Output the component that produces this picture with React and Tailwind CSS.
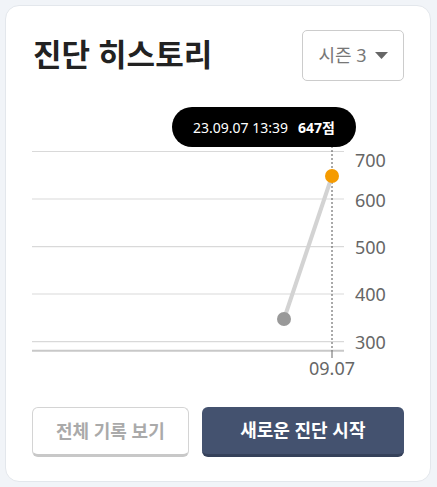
const ticks = [
  { v: 700, y: 51.5, ly: 60 },
  { v: 600, y: 99, ly: 100 },
  { v: 500, y: 146.7, ly: 147 },
  { v: 400, y: 194, ly: 194 },
  { v: 300, y: 241.7, ly: 242 },
];

const HistoryChart = () => {
  return (
    <div className="relative h-[300px] w-[374px]">
      <svg width="374" height="300" className="block">
        {ticks.map((t) => (
          <g key={t.v}>
            <line x1="0" x2="312" y1={t.y} y2={t.y} stroke="#d9d9d9" strokeWidth="1.2" />
            <text
              x="323"
              y={t.ly}
              dominantBaseline="central"
              fontSize="18"
              fill="#666"
              fontFamily="'Noto Sans', sans-serif"
            >
              {t.v}
            </text>
          </g>
        ))}
        <line x1="0" x2="312" y1="250.7" y2="250.7" stroke="#c8c8c8" strokeWidth="2" />
        <line x1="300" x2="300" y1="250" y2="258" stroke="#666" strokeWidth="1" />
        <line x1="300" x2="300" y1="42" y2="250" stroke="#555" strokeWidth="1" strokeDasharray="2 2" />
        <line x1="252" y1="219" x2="300" y2="76" stroke="#d3d3d3" strokeWidth="4" strokeLinecap="round" />
        <circle cx="252" cy="219" r="7" fill="#999" />
        <circle cx="300" cy="76" r="7" fill="#f59b00" />
        <text
          x="300"
          y="268"
          textAnchor="middle"
          dominantBaseline="central"
          fontSize="18"
          fill="#666"
          fontFamily="'Noto Sans', sans-serif"
        >
          09.07
        </text>
      </svg>
      <div className="absolute left-[140px] top-[7px] flex h-[40px] w-[184px] items-center justify-center gap-[10px] rounded-full bg-black text-[14px] text-white">
        <span>23.09.07 13:39</span>
        <span className="font-bold">647점</span>
      </div>
    </div>
  );
};

export default function App() {
  return (
    <div className="min-h-screen bg-[#f1f4f8] p-[5px] font-['Noto_Sans','Noto_Sans_CJK_KR',sans-serif]">
      <div className="flex h-[477px] w-[426px] flex-col rounded-[14px] border border-[#e3e7ec] bg-white px-[26px] pt-[24px]">
        <div className="flex items-start justify-between">
          <h1 className="mt-[5px] pl-[1px] text-[31px] font-bold leading-[38px] text-[#222]">
            진단 히스토리
          </h1>
          <button className="flex h-[51px] w-[102px] items-center justify-center gap-[8px] rounded-[5px] border border-[#ccc] bg-white text-[18px] text-[#777]">
            <span>시즌 3</span>
            <svg width="13" height="7" viewBox="0 0 13 7">
              <path d="M0 0 L13 0 L6.5 7 Z" fill="#666" />
            </svg>
          </button>
        </div>
        <div className="mt-[19px]">
          <HistoryChart />
        </div>
        <div className="mt-[7px] flex gap-[13px]">
          <button className="h-[50px] w-[158px] rounded-[6px] border border-[#d4d4d4] border-b-[3px] border-b-[#c8c8c8] bg-white text-[18px] font-bold text-[#aaa]">
            전체 기록 보기
          </button>
          <button className="h-[50px] w-[204px] rounded-[6px] border-b-[3px] border-b-[#35415a] bg-[#44526f] text-[18px] font-bold text-white">
            새로운 진단 시작
          </button>
        </div>
      </div>
    </div>
  );
}
